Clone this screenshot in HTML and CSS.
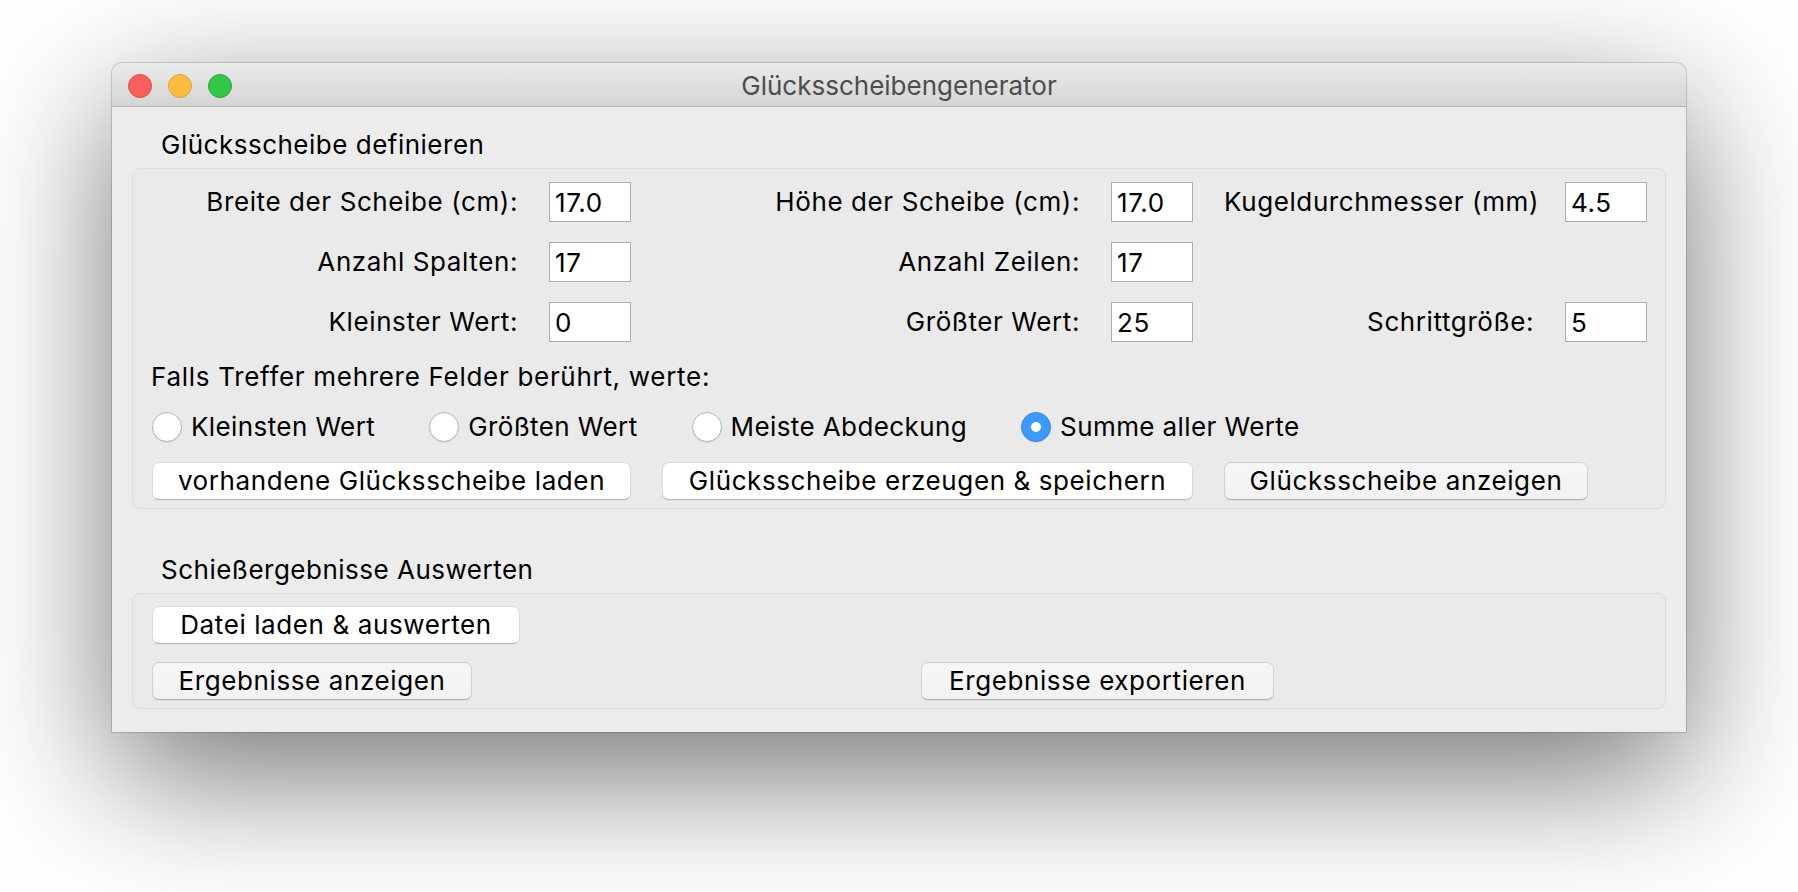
FILE: index.html
```html
<!DOCTYPE html>
<html lang="de">
<head>
<meta charset="utf-8">
<title>Glücksscheibengenerator</title>
<link rel="stylesheet" href="styles.css">
</head>
<body>
<div class="window">
  <div class="titlebar">
    <div class="lights">
      <span class="light red"></span>
      <span class="light yellow"></span>
      <span class="light green"></span>
    </div>
    <div class="title">Glücksscheibengenerator</div>
    <div class="spacer"></div>
  </div>
  <div class="content">
    <div class="section-title">Glücksscheibe definieren</div>
    <div class="group define">
      <div class="lbl">Breite der Scheibe (cm):</div>
      <input class="field" type="text" value="17.0">
      <div class="lbl">Höhe der Scheibe (cm):</div>
      <input class="field" type="text" value="17.0">
      <div class="lbl">Kugeldurchmesser (mm)</div>
      <input class="field" type="text" value="4.5">

      <div class="lbl">Anzahl Spalten:</div>
      <input class="field" type="text" value="17">
      <div class="lbl">Anzahl Zeilen:</div>
      <input class="field" type="text" value="17">
      <div class="empty"></div>

      <div class="lbl">Kleinster Wert:</div>
      <input class="field" type="text" value="0">
      <div class="lbl">Größter Wert:</div>
      <input class="field" type="text" value="25">
      <div class="lbl">Schrittgröße:</div>
      <input class="field" type="text" value="5">

      <div class="question">Falls Treffer mehrere Felder berührt, werte:</div>

      <div class="radios">
        <div class="radio-item"><span class="radio"></span><span class="radio-text">Kleinsten Wert</span></div>
        <div class="radio-item"><span class="radio"></span><span class="radio-text">Größten Wert</span></div>
        <div class="radio-item"><span class="radio"></span><span class="radio-text">Meiste Abdeckung</span></div>
        <div class="radio-item"><span class="radio checked"></span><span class="radio-text">Summe aller Werte</span></div>
      </div>

      <button class="btn span-a" type="button">vorhandene Glücksscheibe laden</button>
      <button class="btn span-b" type="button">Glücksscheibe erzeugen &amp; speichern</button>
      <button class="btn soft span-c" type="button">Glücksscheibe anzeigen</button>
    </div>

    <div class="section-title second">Schießergebnisse Auswerten</div>
    <div class="group evaluate">
      <button class="btn load" type="button">Datei laden &amp; auswerten</button>
      <button class="btn soft show" type="button">Ergebnisse anzeigen</button>
      <button class="btn soft export" type="button">Ergebnisse exportieren</button>
    </div>
  </div>
</div>
</body>
</html>
```

FILE: styles.css
```css
html {
  margin: 0;
  background: #ffffff;
  min-height: 100%;
}

body {
  margin: 0;
  box-sizing: border-box;
  min-height: 892px;
  padding: 63px 0 0 112px;
  background: #ffffff;
  font-family: Inter, "Liberation Sans", sans-serif;
  font-size: 26px;
  letter-spacing: 0.6px;
  color: #000;
}

.window {
  width: 1574px;
  background: #ececec;
  border-radius: 10px 10px 0 0;
  box-shadow: 0 0 0 1px rgba(0, 0, 0, 0.16), 0 44px 140px rgba(0, 0, 0, 0.55);
  overflow: hidden;
}

.titlebar {
  height: 43px;
  border-bottom: 1px solid #b4b4b4;
  background: linear-gradient(#ebebeb, #d4d4d4);
  display: grid;
  grid-template-columns: 1fr auto 1fr;
  align-items: center;
}

.lights {
  display: flex;
  gap: 16px;
  padding-left: 16px;
  padding-top: 2px;
}

.light {
  width: 22px;
  height: 22px;
  border-radius: 50%;
  border: 1px solid transparent;
}

.light.red { background: #fc605c; border-color: #de4c46; }
.light.yellow { background: #fdbc40; border-color: #dfa136; }
.light.green { background: #34c84a; border-color: #29a83a; }

.title {
  color: #4d4d4d;
  font-size: 26px;
  letter-spacing: 0;
  line-height: 32px;
  padding-top: 2px;
}

.content {
  padding: 22px 20px 23px 20px;
}

.section-title {
  line-height: 32px;
  padding-left: 29px;
  margin-bottom: 7px;
  letter-spacing: 0.5px;
}

.section-title.second {
  margin-top: 45px;
}

.group {
  border: 1px solid #dcdcdc;
  border-radius: 8px;
  background: #eaeaea;
}

.define {
  padding: 13px 18px 8px 18px;
  display: grid;
  grid-template-columns: 367px 82px 418px 82px 310px 82px;
  grid-template-rows: 40px 40px 40px 30px 30px 38px;
  column-gap: 31px;
  row-gap: 20px;
  align-items: center;
}

.lbl {
  text-align: right;
  line-height: 32px;
  white-space: nowrap;
}

.empty {
  grid-column: 5 / 7;
}

.field {
  box-sizing: border-box;
  width: 82px;
  height: 40px;
  margin: 0;
  padding: 0 5px;
  border: 1px solid #aeaeae;
  border-radius: 0;
  background: #fff;
  font-family: Inter, "Liberation Sans", sans-serif;
  font-size: 26px;
  letter-spacing: 0.6px;
  color: #000;
  outline: none;
}

.question {
  grid-column: 1 / 7;
  line-height: 30px;
  letter-spacing: 0.7px;
}

.radios {
  grid-column: 1 / 7;
  display: flex;
  align-items: center;
  gap: 54px;
  padding-left: 1px;
}

.radio-item {
  display: flex;
  align-items: center;
  gap: 9px;
}

.radio {
  box-sizing: border-box;
  width: 30px;
  height: 30px;
  border-radius: 50%;
  background: #fff;
  border: 1px solid #b5b5b5;
  box-shadow: 0 1px 1px rgba(0, 0, 0, 0.08);
  display: flex;
  align-items: center;
  justify-content: center;
}

.radio.checked {
  background: #3d99fc;
  border-color: #3585e6;
}

.radio.checked::after {
  content: "";
  width: 10px;
  height: 10px;
  border-radius: 50%;
  background: #fff;
}

.radio-text {
  line-height: 30px;
  white-space: nowrap;
  letter-spacing: 0.4px;
}

.btn {
  box-sizing: border-box;
  height: 38px;
  margin: 0;
  padding: 0;
  border: 1px solid rgba(0, 0, 0, 0.14);
  border-bottom-color: rgba(0, 0, 0, 0.28);
  border-radius: 7px;
  background: #ffffff;
  box-shadow: 0 1px 1px rgba(0, 0, 0, 0.06);
  font-family: Inter, "Liberation Sans", sans-serif;
  font-size: 26px;
  letter-spacing: 0.6px;
  color: #000;
  text-align: center;
  white-space: nowrap;
  line-height: 34px;
}

.btn.soft {
  background: linear-gradient(#f6f6f6, #f2f2f2);
}

.span-a {
  grid-column: 1 / 3;
  margin-left: 1px;
}

.span-b {
  grid-column: 3 / 5;
}

.span-c {
  grid-column: 5 / 7;
  width: 364px;
  justify-self: start;
}

.evaluate {
  padding: 12px 18px 8px 18px;
  display: grid;
  grid-template-columns: 770px auto;
  grid-template-rows: 38px 38px;
  row-gap: 18px;
  justify-items: start;
}

.load {
  grid-column: 1;
  grid-row: 1;
  width: 368px;
  margin-left: 1px;
}

.show {
  grid-column: 1;
  grid-row: 2;
  width: 320px;
  margin-left: 1px;
}

.export {
  grid-column: 2;
  grid-row: 2;
  width: 353px;
}
```
